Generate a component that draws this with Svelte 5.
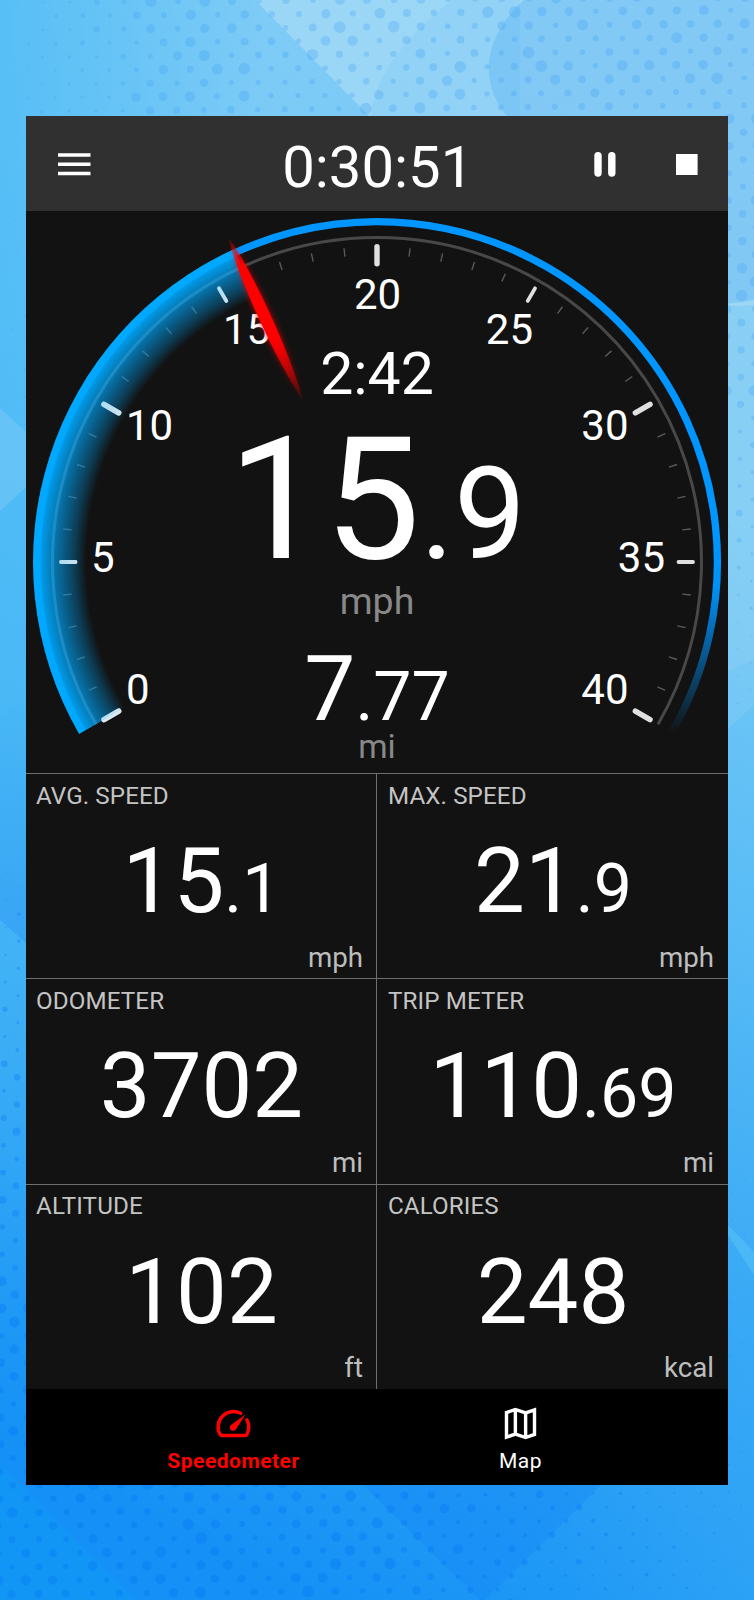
<script lang="ts">
  interface Stat {
    label: string
    whole: string
    frac?: string
    unit: string
  }

  const stats: Stat[] = [
    { label: 'AVG. SPEED', whole: '15', frac: '.1', unit: 'mph' },
    { label: 'MAX. SPEED', whole: '21', frac: '.9', unit: 'mph' },
    { label: 'ODOMETER', whole: '3702', unit: 'mi' },
    { label: 'TRIP METER', whole: '110', frac: '.69', unit: 'mi' },
    { label: 'ALTITUDE', whole: '102', unit: 'ft' },
    { label: 'CALORIES', whole: '248', unit: 'kcal' },
  ]

  // Dial: 0..40 mph over 240 degrees, 0 degrees points up
  const speed = 15.9
  const toAngle = (v: number) => v * 6 - 120

  function polar(r: number, deg: number) {
    const a = (deg * Math.PI) / 180
    return `${(r * Math.sin(a)).toFixed(2)} ${(-r * Math.cos(a)).toFixed(2)}`
  }

  function arc(r: number, from: number, to: number) {
    const large = to - from > 180 ? 1 : 0
    return `M${polar(r, from)}A${r} ${r} 0 ${large} 1 ${polar(r, to)}`
  }

  const ticks = Array.from({ length: 41 }, (_, v) => ({
    angle: toAngle(v),
    kind: v % 10 === 0 ? 'major' : v % 5 === 0 ? 'mid' : 'minor',
  }))

  const needleAngle = toAngle(speed)
  const sector = `${arc(344, -120, needleAngle)}L0 0Z`

  const labels = [
    { text: '0', x: -251, y: 141.5, anchor: 'start' },
    { text: '5', x: -286, y: 10, anchor: 'start' },
    { text: '10', x: -251, y: -122, anchor: 'start' },
    { text: '15', x: -154, y: -218.3, anchor: 'start' },
    { text: '20', x: 0.5, y: -253.3, anchor: 'middle' },
    { text: '25', x: 156, y: -218.3, anchor: 'end' },
    { text: '30', x: 251.5, y: -122, anchor: 'end' },
    { text: '35', x: 288, y: 10, anchor: 'end' },
    { text: '40', x: 251.5, y: 141.5, anchor: 'end' },
  ]

  // Halftone backdrop: staggered rows, radius fades away from the clusters
  interface Dot {
    x: number
    y: number
    r: number
  }
  const dots: Dot[] = []
  for (let row = 0; row < 119; row++) {
    for (let col = 0; col < 29; col++) {
      const x = col * 27 - 11 + (row % 2 ? 13 : 0) - row * 0.15
      const y = row * 13.6 + 3 - x * 0.009
      if (x > 32 && x < 722 && y > 122 && y < 1480) continue
      const top = Math.min((x + 20) / 190, 1) * Math.min(1, (760 - y) / 420)
      const bottom = Math.min(1, (y - 790) / 420) * Math.min(1, (800 - x) / 420)
      const noise = Math.abs(Math.sin(row * 12.9 + col * 78.2) * 43.7) % 1
      const r = Math.max(top, bottom) * (2.6 + noise * noise * 3.4)
      if (r > 0.5) dots.push({ x, y, r })
    }
  }
</script>

<main class="screen">
  <svg class="backdrop" viewBox="0 0 754 1600" aria-hidden="true">
    <defs>
      <linearGradient id="sky" x1="0.62" y1="0" x2="0.38" y2="1">
        <stop offset="0" stop-color="#80ccf6" />
        <stop offset="0.22" stop-color="#78c9f6" />
        <stop offset="0.45" stop-color="#5abdf6" />
        <stop offset="0.7" stop-color="#38a8f5" />
        <stop offset="0.92" stop-color="#1d98f6" />
        <stop offset="1" stop-color="#1490f6" />
      </linearGradient>
      <linearGradient id="side">
        <stop offset="0" stop-color="#48baf6" stop-opacity="0.7" />
        <stop offset="1" stop-color="#48baf6" stop-opacity="0" />
      </linearGradient>
      <linearGradient id="side-right">
        <stop offset="0" stop-color="#38aaf6" stop-opacity="0" />
        <stop offset="1" stop-color="#38aaf6" stop-opacity="0.4" />
      </linearGradient>
      <linearGradient id="shade" x1="0" y1="0" x2="0" y2="1">
        <stop offset="0" stop-color="#2f97f4" stop-opacity="0" />
        <stop offset="1" stop-color="#2f97f4" stop-opacity="0.55" />
      </linearGradient>
      <linearGradient id="lift" x1="0" y1="0" x2="0" y2="1">
        <stop offset="0" stop-color="#48baf6" stop-opacity="0.6" />
        <stop offset="1" stop-color="#48baf6" stop-opacity="0" />
      </linearGradient>
    </defs>
    <rect width="754" height="1600" fill="url(#sky)" />
    <path d="M0 0H260V943H26L0 920Z" fill="url(#side)" />
    <path d="M0 920L26 943V1320H0Z" fill="url(#lift)" />
    <rect x="560" y="1250" width="194" height="350" fill="url(#side-right)" />
    <path d="M255 0H754V305Q640 320 507 116H369Z" fill="#b8e2f6" opacity="0.5" />
    <path d="M452 0Q365 70 371 130H520V0Z" fill="#6fc3f4" opacity="0.22" />
    <path d="M524 0C475 45 485 90 507 116Q600 330 754 300V0Z" fill="#63b9f4" opacity="0.45" />
    <path d="M728 305L754 300V660L728 671Z" fill="#a4dbf3" opacity="0.35" />
    <path d="M728 671L754 660V705L728 729Z" fill="#a4dbf3" opacity="0.2" />
    <path d="M0 408L26 432V487L0 511Z" fill="#8fd2f8" opacity="0.35" />
    <path d="M0 718L26 693V943L0 920Z" fill="url(#shade)" />
    <path d="M728 1225L754 1252V1275L728 1235Z" fill="#5cc4fa" opacity="0.5" />
    <path d="M0 1465L135 1600H0Z" fill="#10a0f7" opacity="0.4" />
    <path d="M363 1485H601L485 1600H480Z" fill="#0f80f5" opacity="0.3" />
    <g class="dots">
      {#each dots as dot}
        <circle cx={dot.x} cy={dot.y} r={dot.r} class:low={dot.y > 700} />
      {/each}
    </g>
  </svg>

  <div class="phone">
    <header class="bar">
      <button type="button" class="icon-btn" aria-label="Menu">
        <svg width="33" height="23" viewBox="0 0 33 23">
          <path d="M0 2H32.5M0 11.2H32.5M0 20.4H32.5" stroke="#fff" stroke-width="3.5" />
        </svg>
      </button>
      <span class="timer">0:30:51</span>
      <div class="actions">
        <button type="button" class="icon-btn" aria-label="Pause">
          <svg width="22" height="25" viewBox="0 0 22 25">
            <path d="M4 3.8V21M17.8 3.8V21" stroke="#fff" stroke-width="7.4" stroke-linecap="round" />
          </svg>
        </button>
        <button type="button" class="icon-btn" aria-label="Stop">
          <svg width="22" height="21" viewBox="0 0 22 21"><rect width="21.6" height="21" fill="#fff" /></svg>
        </button>
      </div>
    </header>

    <svg class="gauge" viewBox="-351 -351 702 562">
      <defs>
        <radialGradient id="glow" gradientUnits="userSpaceOnUse" cx="0" cy="0" r="344">
          <stop offset="0.845" stop-color="#00a2f4" stop-opacity="0" />
          <stop offset="0.88" stop-color="#00a2f4" stop-opacity="0.3" />
          <stop offset="0.93" stop-color="#00a2f4" stop-opacity="0.63" />
          <stop offset="0.975" stop-color="#00a2f4" stop-opacity="0.93" />
          <stop offset="0.98" stop-color="#00a8ff" stop-opacity="1" />
          <stop offset="1" stop-color="#00a8ff" />
        </radialGradient>
        <linearGradient id="rim" gradientUnits="userSpaceOnUse" x1="0" y1="0" x2="0" y2="172">
          <stop offset="0" stop-color="#0095ff" />
          <stop offset="0.15" stop-color="#0090f6" />
          <stop offset="1" stop-color="#0095ff" stop-opacity="0" />
        </linearGradient>
        <linearGradient id="needle" gradientUnits="userSpaceOnUse" x1="0" y1="-357" x2="0" y2="-178">
          <stop offset="0" stop-color="#f00" stop-opacity="0.15" />
          <stop offset="0.1" stop-color="#f00" stop-opacity="0.6" />
          <stop offset="0.18" stop-color="#f00" />
          <stop offset="0.62" stop-color="#f00" />
          <stop offset="1" stop-color="#f00" stop-opacity="0.12" />
        </linearGradient>
        <filter id="halo" filterUnits="userSpaceOnUse" x="-30" y="-370" width="60" height="210">
          <feGaussianBlur stdDeviation="3.2" />
        </filter>
      </defs>

      <path d={arc(340.4, needleAngle, 120)} fill="none" stroke="url(#rim)" stroke-width="7.3" />
      <path d={arc(324.5, -120, 120)} fill="none" stroke="#484848" stroke-width="3" />

      {#each ticks as tick}
        <g transform="rotate({tick.angle})">
          {#if tick.kind === 'major'}
            <path class="tick" d="M0 -315.3V-298.3" stroke-width="5.4" />
          {:else if tick.kind === 'mid'}
            <path class="tick" d="M0 -316V-301.5" stroke-width="3.8" />
          {:else}
            <path class="tick minor" d="M0 -315.5V-307" stroke-width="1.4" />
          {/if}
        </g>
      {/each}

      <path d={sector} fill="url(#glow)" />
      {#each ticks as tick}
        {#if tick.angle < needleAngle && tick.kind !== 'minor'}
          <path
            class="tick lit"
            transform="rotate({tick.angle})"
            d={tick.kind === 'major' ? 'M0 -315.3V-298.3' : 'M0 -316V-301.5'}
            stroke-width={tick.kind === 'major' ? 5.4 : 3.8}
          />
        {/if}
      {/each}
      <path d={arc(324.5, -120, needleAngle)} fill="none" stroke="#6fb0d8" stroke-opacity="0.1" stroke-width="3" />

      {#each labels as l}
        <text class="scale" x={l.x} y={l.y} text-anchor={l.anchor}>{l.text}</text>
      {/each}

      <g transform="rotate({needleAngle})">
        <path d="M0 -352Q12 -267 0 -182Q-12 -267 0 -352Z" fill="url(#needle)" filter="url(#halo)" opacity="0.8" />
        <path d="M0 -357C8 -320 8 -220 0 -178C-8 -220 -8 -320 0 -357Z" fill="url(#needle)" />
      </g>

      <text class="reading clock" y="-167.7">2:42</text>
      <text class="reading speed" y="-3.7">15<tspan class="speed-frac">.9</tspan></text>
      <text class="reading unit" y="51.7">mph</text>
      <text class="reading trip" y="157.7">7<tspan class="trip-frac">.77</tspan></text>
      <text class="reading unit small" y="196.2">mi</text>
    </svg>

    <section class="stats">
      {#each stats as stat}
        <div class="stat">
          <span class="stat-label">{stat.label}</span>
          <span class="stat-value">{stat.whole}{#if stat.frac}<span class="stat-frac">{stat.frac}</span>{/if}</span>
          <span class="stat-unit">{stat.unit}</span>
        </div>
      {/each}
    </section>

    <nav class="tabs">
      <button type="button" class="tab active">
        <svg width="41" height="41" viewBox="0 0 24 24">
          <path
            d="M16.2 6.05A9 9 0 0 0 4.15 18.45Q4.5 19 5.1 19H18.9Q19.5 19 19.85 18.45A9 9 0 0 0 19.85 9.9"
            fill="none" stroke="currentColor" stroke-width="2" stroke-linecap="round"
          />
          <path d="M10.5 12.9L19 6.8L13.5 15.3A1.95 1.95 0 1 1 10.5 12.9Z" fill="currentColor" />
        </svg>
        <span>Speedometer</span>
      </button>
      <button type="button" class="tab">
        <svg width="41" height="41" viewBox="0 0 24 24">
          <path
            d="M3.8 5.6L9 3.8L15 5.8L20.2 4V18.4L15 20.2L9 18.2L3.8 20ZM9 3.8V18.2M15 5.8V20.2"
            fill="none" stroke="currentColor" stroke-width="2"
          />
        </svg>
        <span>Map</span>
      </button>
    </nav>
  </div>
</main>

<style>
  :global(body) {
    background: #4fb6f6;
  }
  .screen {
    position: relative;
    box-sizing: border-box;
    width: 754px;
    height: 1600px;
    padding: 116px 26px 115px;
    overflow: hidden;
    font-family: Roboto, 'Liberation Sans', sans-serif;
    color: #fff;
  }
  .backdrop {
    position: absolute;
    inset: 0;
    width: 754px;
    height: 1600px;
  }
  .dots circle {
    fill: #3f9ff4;
    opacity: 0.27;
  }
  .dots circle.low {
    fill: #0070f4;
    opacity: 0.28;
  }
  .phone {
    position: relative;
    display: flex;
    flex-direction: column;
    height: 1369px;
    background: #121212;
  }
  button {
    border: none;
    padding: 0;
    background: transparent;
    color: inherit;
    font: inherit;
  }
  svg {
    display: block;
  }
  .bar {
    display: grid;
    grid-template-columns: 1fr auto 1fr;
    align-items: center;
    height: 95px;
    padding: 0 30px 0 31.5px;
    box-sizing: border-box;
    background: #303030;
  }
  .icon-btn {
    width: max-content;
    padding-bottom: 2px;
  }
  .timer {
    font-size: 58px;
    line-height: 95px;
    padding-top: 4px;
  }
  .actions {
    display: flex;
    justify-content: flex-end;
    align-items: center;
    gap: 60px;
  }
  .gauge {
    width: 702px;
    height: 562px;
    flex: none;
  }
  .gauge text {
    fill: #fff;
  }
  .gauge .scale {
    font-size: 42px;
  }
  .gauge .reading {
    text-anchor: middle;
  }
  .gauge .clock {
    font-size: 59px;
  }
  .gauge .speed {
    font-size: 171px;
  }
  .gauge .speed-frac {
    font-size: 128px;
  }
  .gauge .trip {
    font-size: 91px;
  }
  .gauge .trip-frac {
    font-size: 68px;
  }
  .gauge .unit {
    font-size: 37.5px;
    fill: #888;
  }
  .gauge .small {
    font-size: 33.5px;
  }
  .tick {
    stroke: #e0e0e0;
    stroke-linecap: round;
  }
  .tick.minor {
    stroke: #5a5a5a;
    stroke-linecap: butt;
  }
  .tick.lit {
    stroke: #d8ecf6;
    stroke-opacity: 0.65;
  }
  .stats {
    display: grid;
    grid-template-columns: 1fr 1fr;
    grid-template-rows: repeat(3, 205.33px);
    height: 616px;
  }
  .stat {
    display: flex;
    flex-direction: column;
    box-sizing: border-box;
    padding: 7.5px 14px 0 10px;
    border-top: 1px solid #6e6e6e;
  }
  .stat:nth-child(odd) {
    border-right: 1px solid #6e6e6e;
    padding-right: 13px;
  }
  .stat:nth-child(even) {
    padding-left: 11px;
  }
  .stat-label {
    font-size: 24.2px;
    line-height: 28px;
    letter-spacing: 0.1px;
    color: #c4c4c4;
  }
  .stat-value {
    height: 92px;
    margin-top: 25.5px;
    padding-left: 4px;
    font-size: 90.5px;
    line-height: 92px;
    align-self: center;
  }
  .stat-frac {
    font-size: 68px;
    line-height: 0;
  }
  .stat-unit {
    margin-top: 14.5px;
    font-size: 27.7px;
    line-height: 32px;
    text-align: right;
    color: #bdbdbd;
  }
  .tabs {
    display: flex;
    justify-content: center;
    flex: 1;
    background: #000;
  }
  .tab {
    display: flex;
    flex-direction: column;
    align-items: center;
    width: 287px;
    padding-top: 14px;
    font-size: 21px;
    line-height: 24px;
    letter-spacing: 0.5px;
  }
  .tab span {
    margin-top: 5px;
  }
  .tab.active {
    color: #f00;
    font-weight: 700;
  }
</style>
